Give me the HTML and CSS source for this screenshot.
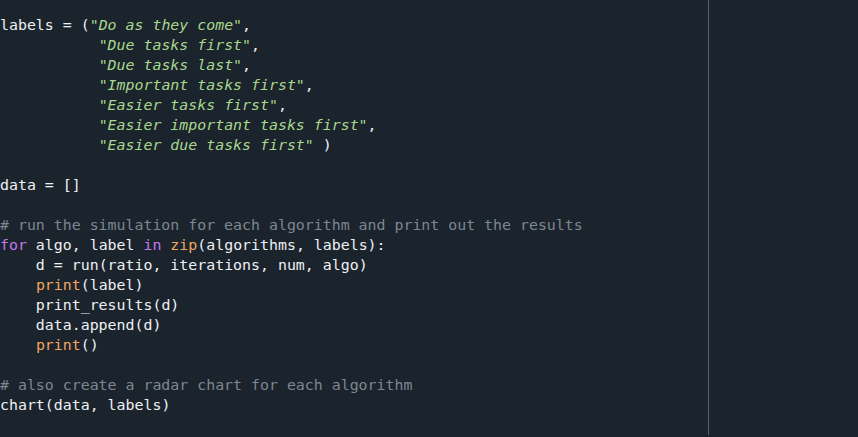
FILE: index.html
```html
<!DOCTYPE html>
<html>
<head>
<meta charset="utf-8">
<link rel="stylesheet" href="styles.css">
</head>
<body>
<div class="editor">
<pre class="code"><span class="id">labels</span> <span class="op">=</span> <span class="p">(</span><span class="s">"Do as they come"</span>,
           <span class="s">"Due tasks first"</span>,
           <span class="s">"Due tasks last"</span>,
           <span class="s">"Important tasks first"</span>,
           <span class="s">"Easier tasks first"</span>,
           <span class="s">"Easier important tasks first"</span>,
           <span class="s">"Easier due tasks first"</span> <span class="p">)</span>

data = []

<span class="c"># run the simulation for each algorithm and print out the results</span>
<span class="k">for</span> algo, label <span class="k">in</span> <span class="b">zip</span><span class="p">(</span>algorithms, labels<span class="p">)</span>:
    d = run<span class="p">(</span>ratio, iterations, num, algo<span class="p">)</span>
    <span class="b">print</span><span class="p">(</span>label<span class="p">)</span>
    print_results<span class="p">(</span>d<span class="p">)</span>
    data.append<span class="p">(</span>d<span class="p">)</span>
    <span class="b">print</span><span class="p">()</span>

<span class="c"># also create a radar chart for each algorithm</span>
chart<span class="p">(</span>data, labels<span class="p">)</span></pre>
<div class="ruler"></div>
</div>
</body>
</html>
```

FILE: styles.css
```css
html, body {
  margin: 0;
  padding: 0;
  background: #1b232d;
}

.editor {
  position: relative;
  width: 858px;
  height: 437px;
  background: #1b232d;
  overflow: hidden;
}

.code {
  margin: 0;
  padding: 15px 0 0 0;
  font-family: "DejaVu Sans Mono", monospace;
  font-size: 14.9px;
  line-height: 20px;
  color: #eef0f2;
  white-space: pre;
}

.s {
  color: #a8d88c;
  font-style: italic;
}

.c {
  color: #7d8791;
}

.k {
  color: #c07ae8;
}

.b {
  color: #f0a660;
}

.p {
  color: #eaf2fa;
}

.ruler {
  position: absolute;
  left: 708px;
  top: 0;
  width: 1px;
  height: 435px;
  background: #59626c;
}
```
